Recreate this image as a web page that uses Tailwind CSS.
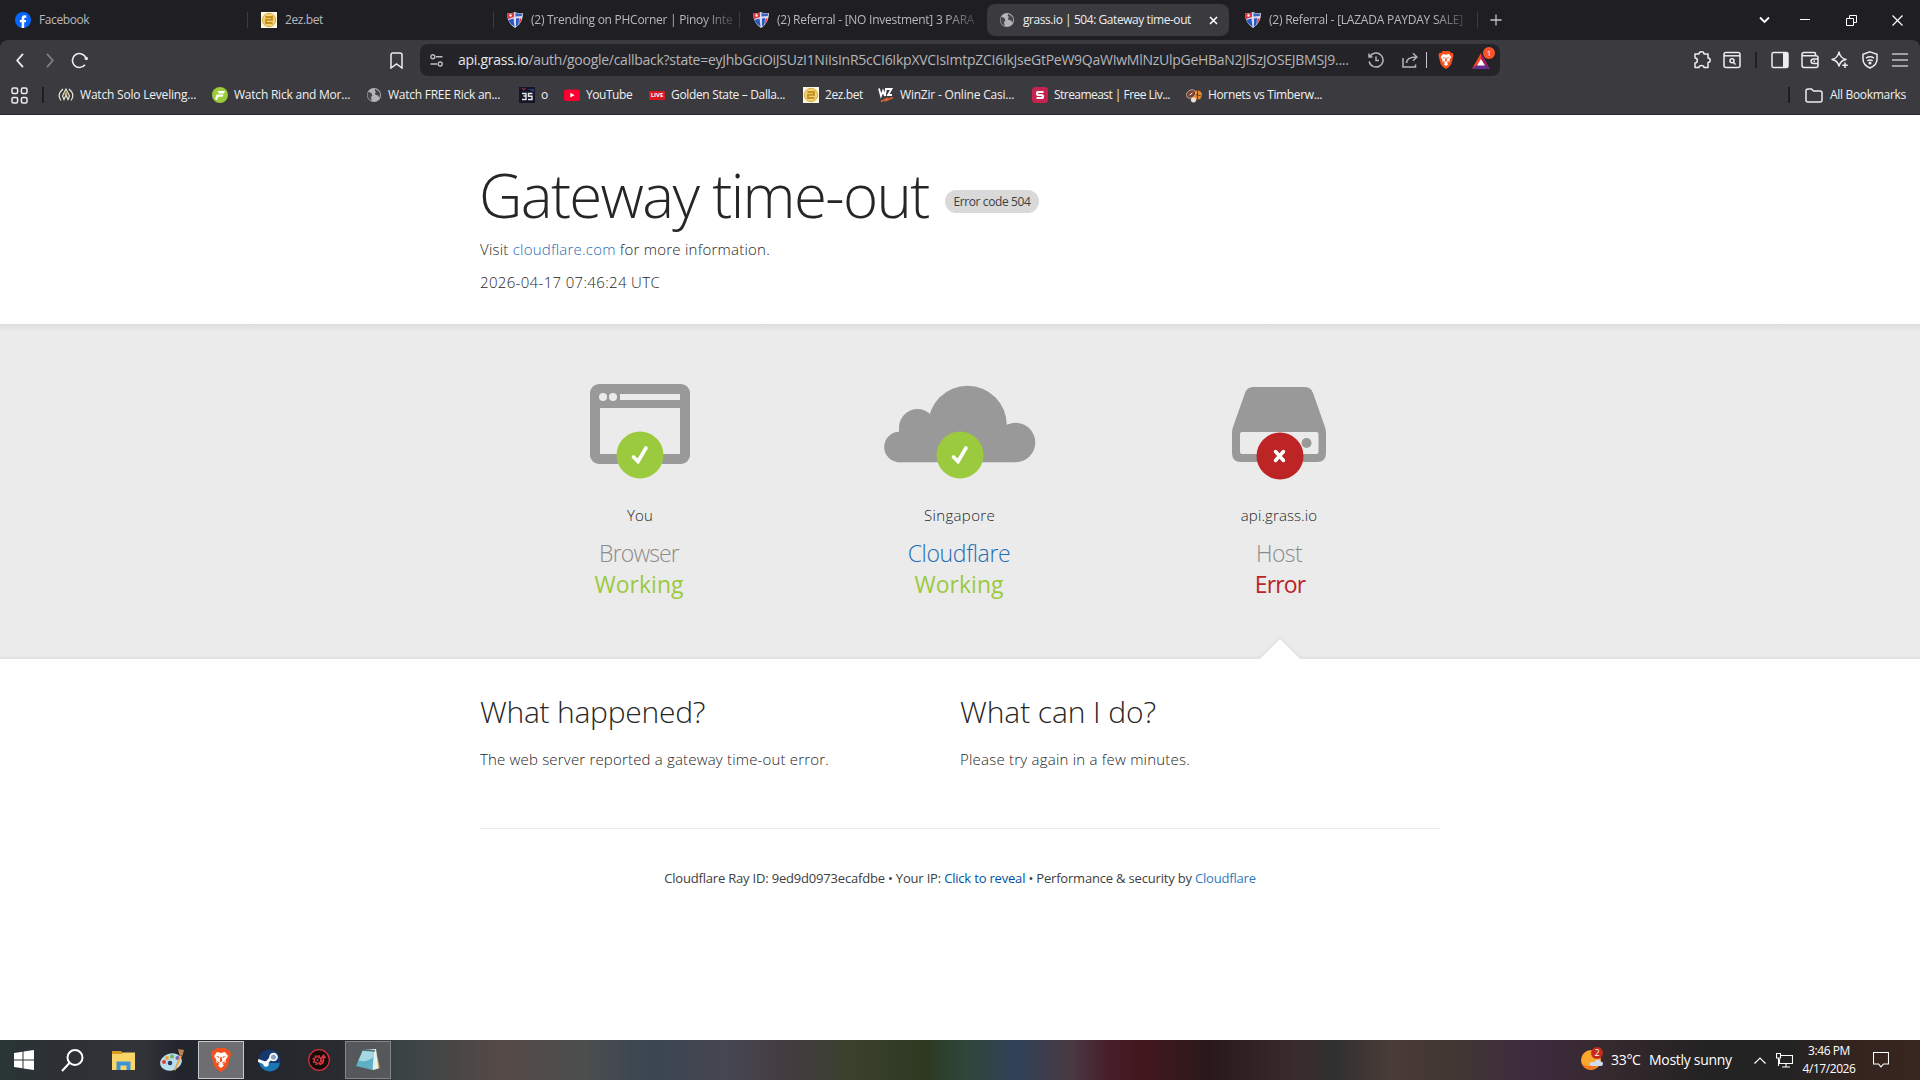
<!DOCTYPE html>
<html lang="en">
<head>
  <meta charset="UTF-8">
  <title>grass.io | 504: Gateway time-out</title>
  <script src="https://cdn.jsdelivr.net/npm/@tailwindcss/browser@4"></script>
</head>
<body class="w-[1920px] h-[1080px] overflow-hidden flex flex-col bg-white font-['Open_Sans','Noto_Sans',sans-serif] text-[#404040]">

  <!-- shared icons -->
  <svg class="hidden">
    <symbol id="ph" viewBox="0 0 16 16">
      <path d="M0 1 Q4 2 8 0 Q12 2 16 1 Q16 11 8 16 Q0 11 0 1Z" fill="#dcdcea"/>
      <path d="M0 1 Q4 2 7 .5 V5 L1 7 Q0 4 0 1Z" fill="#e0303a"/>
      <path d="M8.500 1 Q12 2 15 1.500 L14.800 4 L8.500 4.500Z" fill="#3a62c0"/>
      <path d="M1.300 8 L6.500 6.500 L7.500 14.800 Q3 12 1.300 8Z" fill="#2b55c4"/>
      <path d="M9 6.500 L12 6 L11.500 12 Q10.500 14 9 14.500Z" fill="#2b55c4"/>
      <path d="M12.500 7 L14.500 6 Q14 10 12 12.500Z" fill="#d8303a"/>
      <circle cx="3.500" cy="3.500" r="1.200" fill="#fff"/>
    </symbol>
    <symbol id="globe" viewBox="0 0 16 16">
      <circle cx="8" cy="8" r="7" fill="#b4b4b8"/>
      <path d="M2 5 Q5 5 6 7 Q7 9 5 10 Q5 12 6 14 Q2 12.500 1.500 8.500Z M9 2 Q8 4 10 5 Q8 7 10 8 Q13 8 13 11 Q14.600 9 14 6 Q12.500 3 9 2Z" fill="#45454b"/>
    </symbol>
    <symbol id="coin" viewBox="0 0 16 16">
      <rect width="16" height="16" fill="#fdf8e4"/>
      <circle cx="8" cy="8" r="6.700" fill="#f0d27a" stroke="#d9ac3c"/>
      <path d="M4.500 5 H11 V7.800 H5 V11 H11.500" fill="none" stroke="#c4921f" stroke-width="1.900"/>
    </symbol>
    <symbol id="brave" viewBox="0 0 20 24">
      <path d="M5.500 0 H14.500 L16.500 2.200 L19 2.500 L20 6 L17 17.500 Q15.500 20.500 10 24 Q4.500 20.500 3 17.500 L0 6 L1 2.500 L3.500 2.200Z" fill="#f4511e"/>
      <path d="M6 4 L10 5 L14 4 L17 8 L14.500 12 L15 14 L11.500 16 L13 17.500 L10 20 L7 17.500 L8.500 16 L5 14 L5.500 12 L3 8Z" fill="#fff"/>
      <path d="M5 8 L8.500 8.700 L8 10.300Z M15 8 L11.500 8.700 L12 10.300Z M9.300 9 H10.700 L11.300 13.300 L10 14.300 L8.700 13.300Z M6.500 13 L9 15 L8.300 15.500 L6 14Z M13.500 13 L11 15 L11.700 15.500 L14 14Z" fill="#f4511e"/>
    </symbol>
    <symbol id="check" viewBox="0 0 48 48">
      <circle cx="24" cy="24" r="23.500" fill="#9bca3e"/>
      <path d="M17.500 26 L22 30.500 L30 17" fill="none" stroke="#fff" stroke-width="3.600" stroke-linecap="round"/>
    </symbol>
  </svg>

  <!-- tab strip -->
  <div class="h-10 shrink-0 bg-[#1f1f23] flex items-center text-[12px] leading-4 text-[#b9b9bd] whitespace-nowrap">
    <div class="w-[248px] h-4 flex items-center pl-[15px] gap-2 border-r border-[#3b3b40]">
      <svg class="size-4" viewBox="0 0 16 16"><circle cx="8" cy="8" r="8" fill="#0866ff"/><path d="M6.700 16 V10.300 H4.900 V7.900 H6.700 V6.500 Q6.700 3.300 9.700 3.300 Q10.600 3.300 11.300 3.500 V5.700 H10.200 Q9.200 5.700 9.200 6.800 V7.900 H11.200 L10.800 10.300 H9.200 V16Z" fill="#fff"/></svg>
      <span class="tracking-[-0.4px]">Facebook</span>
    </div>
    <div class="w-[246px] h-4 flex items-center pl-[13px] gap-2 border-r border-[#3b3b40]">
      <svg class="size-4"><use href="#coin"/></svg>
      <span class="tracking-[-0.4px]">2ez.bet</span>
    </div>
    <div class="w-[246px] h-4 flex items-center pl-[13px] gap-2 border-r border-[#3b3b40]">
      <svg class="size-4 shrink-0"><use href="#ph"/></svg>
      <span class="tracking-[-0.26px] mask-[linear-gradient(90deg,#000_85%,#0004)]">(2) Trending on PHCorner | Pinoy Inte</span>
    </div>
    <div class="w-[247px] h-4 flex items-center pl-[13px] gap-2">
      <svg class="size-4 shrink-0"><use href="#ph"/></svg>
      <span class="tracking-[-0.26px] mask-[linear-gradient(90deg,#000_85%,#0004)]">(2) Referral - [NO Investment] 3 PARA</span>
    </div>
    <div class="w-[242px] h-8 flex items-center pl-[12px] pr-[11px] rounded-lg bg-[#3b3b3f] text-[#ededf0]">
      <svg class="size-4 mr-2"><use href="#globe"/></svg>
      <span class="tracking-[-0.44px]">grass.io | 504: Gateway time-out</span>
      <svg class="size-[9px] ml-auto" viewBox="0 0 9 9" stroke="#fff" stroke-width="1.600"><path d="M1 1 L8 8 M8 1 L1 8"/></svg>
    </div>
    <div class="w-[249px] h-4 flex items-center pl-[16px] gap-2 border-r border-[#3b3b40]">
      <svg class="size-4 shrink-0"><use href="#ph"/></svg>
      <span class="tracking-[-0.23px] mask-[linear-gradient(90deg,#000_85%,#0004)]">(2) Referral - [LAZADA PAYDAY SALE]</span>
    </div>
    <svg class="size-3 ml-[12px]" viewBox="0 0 12 12" stroke="#c5c5c9" stroke-width="1.300"><path d="M6 .5 V11.500 M.5 6 H11.500"/></svg>
    <div class="ml-auto flex items-center pr-[17px]">
      <svg class="w-[11px] h-[8px] mr-[30px]" viewBox="0 0 11 8" fill="none" stroke="#fff" stroke-width="1.900"><path d="M1 1.500 L5.500 6 L10 1.500"/></svg>
      <svg class="w-[10px] h-[10px] mr-[36px]" viewBox="0 0 10 10"><path d="M0 4.500 H10" stroke="#fff"/></svg>
      <svg class="size-[11px] mr-[35px]" viewBox="0 0 11 11" fill="none" stroke="#fff"><path d="M.5 3.500 H7.500 V10.500 H.5Z M3.500 3.500 V.5 H10.500 V7.500 H7.500"/></svg>
      <svg class="size-[11px]" viewBox="0 0 11 11" stroke="#fff" stroke-width="1.200"><path d="M.5 .5 L10.500 10.500 M10.500 .5 L.5 10.500"/></svg>
    </div>
  </div>

  <div class="bg-[#1f1f23] shrink-0">
    <div class="h-[75px] rounded-t-lg bg-[#3b3b3f] border-b border-[#2c2c30] text-[#f0f0f2]">
      <!-- address bar -->
      <div class="h-10 flex items-center pl-[16px] pr-[12px]">
        <svg class="w-[8px] h-[15px]" viewBox="0 0 8 15" fill="none" stroke="#ededf0" stroke-width="1.800"><path d="M7 .8 L1.200 7.500 L7 14.200"/></svg>
        <svg class="w-[8px] h-[15px] ml-[22px]" viewBox="0 0 8 15" fill="none" stroke="#7e7e84" stroke-width="1.800"><path d="M1 .8 L6.800 7.500 L1 14.200"/></svg>
        <svg class="w-[18px] h-[17px] ml-[17px]" viewBox="0 0 18 17" fill="none" stroke="#ededf0" stroke-width="1.600"><path d="M14 12.800 A7 7 0 1 1 15 6"/><circle cx="15.300" cy="6.500" r="1.700" fill="#ededf0" stroke="none"/></svg>
        <svg class="w-[13px] h-[17px] ml-[301px]" viewBox="0 0 13 17" fill="none" stroke="#ededf0" stroke-width="1.500"><path d="M1 3 Q1 1 3 1 H10 Q12 1 12 3 V16 L6.500 12 L1 16Z"/></svg>

        <div class="ml-[17px] w-[1080px] h-8 rounded-lg bg-[#242428] flex items-center pl-[10px]">
          <svg class="w-[13px] h-[13px]" viewBox="0 0 13 13" fill="none" stroke="#bdbdc2" stroke-width="1.400"><circle cx="2.800" cy="2.800" r="2"/><path d="M6 2.800 H12.500 M.5 10 H7"/><circle cx="10.200" cy="10" r="2"/></svg>
          <span class="ml-[15px] w-[894px] text-[14px] leading-5 whitespace-nowrap tracking-[-0.27px] text-[#b5b5b9]"><span class="text-[#e6e6e9]">api.grass.io</span>/auth/google/callback?state=eyJhbGciOiJSUzI1NiIsInR5cCI6IkpXVCIsImtpZCI6IkJseGtPeW9QaWIwMlNzUlpGeHBaN2JlSzJOSEJBMSJ9....</span>
          <svg class="w-[16px] h-[16px] ml-[16px]" viewBox="0 0 16 16" fill="none" stroke="#b5b5b9" stroke-width="1.500"><path d="M2 4.500 A7 7 0 1 1 1.200 9.500 M1 1.500 V5 H4.500 M8 4.500 V8.500 H11"/></svg>
          <svg class="w-[16px] h-[16px] ml-[18px]" viewBox="0 0 16 16" fill="none" stroke="#b5b5b9" stroke-width="1.500"><path d="M1 6 V15 H13.500 V12.500 M4.500 11 Q4.500 5 14.500 5 M11 1.200 L15 5 L11 8.800"/></svg>
          <span class="w-px h-4 bg-[#c9c9cd] ml-[8px]"></span>
          <svg class="w-[16px] h-[18px] ml-[11px]"><use href="#brave"/></svg>
          <div class="relative ml-[18px] w-[18px] h-[15px]">
            <svg class="w-[18px] h-[16px]" viewBox="0 0 18 16"><path d="M9 0 L9 9 L0 16Z" fill="#ff4724"/><path d="M9 0 L18 16 L9 9Z" fill="#9e1f63"/><path d="M0 16 H18 L9 9Z" fill="#662d91"/><path d="M9 6 L13 12.500 H5Z" fill="#fff"/></svg>
            <span class="absolute -top-[6px] left-[11px] size-[12px] rounded-full bg-[#fb542b] text-white text-[8px] leading-[12px] text-center">1</span>
          </div>
        </div>

        <div class="ml-auto flex items-center">
          <svg class="size-[18px]" viewBox="0 0 18 18" fill="none" stroke="#ededf0" stroke-width="1.500" stroke-linejoin="round"><path d="M2 3 H6 Q6 .8 8.500 .8 Q11 .8 11 3 H15 V7 Q17.200 7 17.200 9.300 Q17.200 11.500 15 11.500 V16.500 H11 Q11 14.500 8.500 14.500 Q6 14.500 6 16.500 H2 V12 Q4.300 12 4.300 9.500 Q4.300 7 2 7Z"/></svg>
          <svg class="size-[18px] ml-[12px]" viewBox="0 0 18 18" fill="none" stroke="#ededf0" stroke-width="1.500"><rect x="1" y="1.500" width="16" height="15" rx="2"/><path d="M1 4.800 H17"/><circle cx="9" cy="9.800" r="2"/><path d="M10.500 11.500 L12.500 13.500"/></svg>
          <span class="w-[2px] h-4 bg-[#1f1f23] ml-[14px]"></span>
          <svg class="size-[18px] ml-[14px]" viewBox="0 0 18 18"><rect x="1" y="1.500" width="16" height="15" rx="1.500" fill="none" stroke="#ededf0" stroke-width="1.500"/><path d="M12 1.500 H17 V16.500 H12Z" fill="#ededf0"/></svg>
          <svg class="size-[18px] ml-[12px]" viewBox="0 0 18 18" fill="none" stroke="#ededf0" stroke-width="1.500"><path d="M14.500 4.500 V2.500 Q14.500 1.500 13 1.500 H3 Q1 1.500 1 3.300 V14 Q1 16.500 3 16.500 H15 Q17 16.500 17 14.500 V6.500 Q17 4.700 15 4.700 H3 Q1 4.700 1 3.300 M17 8 H12.500 Q10 8 10 10.300 Q10 12.500 12.500 12.500 H17 M12.500 10.300 H14"/></svg>
          <svg class="size-[18px] ml-[12px]" viewBox="0 0 18 18" fill="none" stroke="#ededf0" stroke-width="1.500" stroke-linejoin="round"><path d="M8 1 Q9 7 15 8.500 Q9.500 9.500 8 15 Q6.500 9.500 1 8.500 Q7 7 8 1Z"/><path d="M14 11.500 V17 M11.300 14.200 H16.800"/></svg>
          <svg class="w-[16px] h-[18px] ml-[13px]" viewBox="0 0 16 18" fill="none" stroke="#ededf0" stroke-width="1.500"><path d="M8 .9 L15 3.300 V8 Q15 14 8 17 Q1 14 1 8 V3.300Z"/><path d="M4 7.200 Q8 4.500 12 7.200 M5.300 9.800 Q8 8 10.700 9.800"/><circle cx="8" cy="12" r=".8" fill="#ededf0"/></svg>
          <svg class="w-[16px] h-[14px] ml-[14px]" viewBox="0 0 16 14" stroke="#c4c4c8" stroke-width="1.600"><path d="M0 1 H16 M0 7 H16 M0 13 H16"/></svg>
        </div>
      </div>

      <!-- bookmarks bar -->
      <div class="h-[30px] flex items-center pl-[11px] pr-[14px] text-[12px] leading-4 whitespace-nowrap">
        <svg class="size-[17px]" viewBox="0 0 17 17" fill="none" stroke="#ededf0" stroke-width="1.500"><rect x="1" y="1" width="5.600" height="5.600" rx="1.500"/><rect x="10.400" y="1" width="5.600" height="5.600" rx="1.500"/><rect x="1" y="10.400" width="5.600" height="5.600" rx="1.500"/><rect x="10.400" y="10.400" width="5.600" height="5.600" rx="1.500"/></svg>
        <span class="w-[2px] h-4 bg-[#1f1f23] ml-[14px] mr-[14px]"></span>
        <div class="w-[154px] flex items-center gap-[6px]">
          <svg class="size-4" viewBox="0 0 16 16" fill="none" stroke="#e9e4d2" stroke-width="1.200"><path d="M5 2 Q-1.500 7.500 3 13.500 M11 2 Q17.500 7.500 13 13.500 M8 2 L4.500 9 L6 12.500 L8 8 L10 12.500 L11.500 9Z"/><path d="M8 4 L6.500 8 H9.500Z" fill="#d8b04a" stroke="none"/></svg>
          <span class="tracking-[-0.2px]">Watch Solo Leveling...</span>
        </div>
        <div class="w-[154px] flex items-center gap-[6px]">
          <svg class="size-4" viewBox="0 0 16 16"><circle cx="8" cy="8" r="8" fill="#9ccb3b"/><path d="M5.500 4 H13 L12 6.500 H7 M4.500 7.500 H11.500 L10.500 9.800 H6.500 L5 13 L3 12Z" fill="#fff"/></svg>
          <span class="tracking-[-0.22px]">Watch Rick and Mor...</span>
        </div>
        <div class="w-[153px] flex items-center gap-[6px]">
          <svg class="size-4"><use href="#globe"/></svg>
          <span class="tracking-[-0.25px]">Watch FREE Rick an...</span>
        </div>
        <div class="w-[45px] flex items-center gap-[6px]">
          <svg class="size-4" viewBox="0 0 16 16"><rect width="16" height="16" fill="#14142a"/><path d="M2 1 H7 L5 4Z" fill="#7a2430"/><path d="M9 2 H15 V5Z" fill="#28407c"/><path d="M3 6.500 H7 V9 H4.500 M7 9 V12.500 H3 M13.500 6.500 H9.500 V9.300 H13 V12.500 H9" fill="none" stroke="#e6e6e6" stroke-width="1.400"/></svg>
          <span>o</span>
        </div>
        <div class="w-[85px] flex items-center gap-[6px]">
          <svg class="size-4" viewBox="0 0 16 16"><rect y="2.500" width="16" height="11.500" rx="2.500" fill="#ff0033"/><path d="M6.300 5.800 L10.500 8.200 L6.300 10.600Z" fill="#fff"/></svg>
          <span class="tracking-[-0.45px]">YouTube</span>
        </div>
        <div class="w-[154px] flex items-center gap-[6px]">
          <span class="w-4 h-[9px] bg-[#d81920] rounded-[1px] text-white text-[6px] leading-[9px] font-bold text-center">LIVE</span>
          <span class="tracking-[-0.34px]">Golden State – Dalla...</span>
        </div>
        <div class="w-[75px] flex items-center gap-[6px]">
          <svg class="size-4"><use href="#coin"/></svg>
          <span class="tracking-[-0.4px]">2ez.bet</span>
        </div>
        <div class="w-[154px] flex items-center gap-[6px]">
          <svg class="size-4" viewBox="0 0 16 16" fill="none"><path d="M1 1.500 L3 9 L5 4 L7 9 L8 1 M8.500 2 H13.500 L10 8 H14" stroke="#fff" stroke-width="1.800"/><path d="M3 14.500 L9 11.500 L8 13.500 L15 10.500" stroke="#e8642c" stroke-width="1.400"/></svg>
          <span class="tracking-[-0.2px]">WinZir - Online Casi...</span>
        </div>
        <div class="w-[154px] flex items-center gap-[6px]">
          <svg class="size-4" viewBox="0 0 16 16"><rect width="16" height="16" rx="3.500" fill="#c8234d"/><path d="M11.500 5 H6 Q5 5 5 6.200 Q5 8 6.500 8 H9.500 Q11 8 11 9.500 Q11 11 9.500 11 H4.500" fill="none" stroke="#fff" stroke-width="2.200"/></svg>
          <span class="tracking-[-0.54px]">Streameast | Free Liv...</span>
        </div>
        <div class="flex items-center gap-[6px]">
          <svg class="size-4" viewBox="0 0 16 16"><circle cx="11.500" cy="8" r="4.500" fill="#e58a2c"/><path d="M7.500 7 L15.500 9 M11.500 3.500 V12.500" stroke="#5a3212" stroke-width=".8"/><ellipse cx="5" cy="7" rx="5" ry="3.800" transform="rotate(-35 5 7)" fill="#7a4030" stroke="#e9d8cc" stroke-width=".6"/><path d="M3.500 8 L6.500 6" stroke="#fff"/><circle cx="7.500" cy="12.800" r="2.600" fill="#e9e2d8"/></svg>
          <span class="tracking-[-0.35px]">Hornets vs Timberw...</span>
        </div>
        <div class="ml-auto flex items-center">
          <span class="w-[2px] h-4 bg-[#1f1f23] mr-[15px]"></span>
          <svg class="w-[18px] h-[15px] mr-[7px]" viewBox="0 0 18 15" fill="none" stroke="#ededf0" stroke-width="1.500"><path d="M1 3 Q1 1 3 1 H6.500 L8.500 3 H15 Q17 3 17 5 V12 Q17 14 15 14 H3 Q1 14 1 12Z"/></svg>
          <span class="tracking-[-0.3px]">All Bookmarks</span>
        </div>
      </div>
    </div>
  </div>

  <!-- page -->
  <main class="flex-1 font-light text-[15px] leading-6 text-[#262626]">
    <header class="w-[960px] h-[209px] mx-auto pt-[50px]">
      <div class="flex items-start">
        <h1 class="text-[60px] leading-[60px] tracking-[-1.65px] whitespace-nowrap w-[466px] -ml-px">Gateway time-out</h1>
        <span class="mt-[25px] h-[23px] w-[94px] rounded-full bg-[#d9d9d9] text-[12px] leading-[23px] font-normal tracking-[-0.38px] text-center text-[#404040]">Error code 504</span>
      </div>
      <p class="mt-[12px] tracking-[0.23px]">Visit <a class="text-[#1f6cb2]">cloudflare.com</a> for more information.</p>
      <p class="mt-[9px] tracking-[0.33px]">2026-04-17 07:46:24 UTC</p>
    </header>

    <section class="relative h-[335px] bg-[linear-gradient(180deg,#dedede_0px,#ebebeb_8px,#ebebeb_331px,#dfdfdf_335px)]">
      <div class="w-[960px] mx-auto grid grid-cols-3 text-center pt-[60px]">
        <div>
          <div class="relative h-[119px]">
            <svg class="w-[100px] h-[80px] mx-auto" viewBox="0 0 100 80">
              <rect width="100" height="80" rx="9" fill="#999"/>
              <circle cx="13" cy="13" r="4" fill="#ebebeb"/><circle cx="23" cy="13" r="4" fill="#ebebeb"/>
              <path d="M30 10 H90 V16 H30Z M10 24 H90 V70 H10Z" fill="#ebebeb"/>
            </svg>
            <svg class="absolute left-[136px] top-[47px] size-12"><use href="#check"/></svg>
          </div>
          <p class="tracking-[0.2px]">You</p>
          <h3 class="mt-[11px] -ml-[2px] text-[23px] leading-[31px] tracking-[-0.85px] text-[#8c8c8c]">Browser</h3>
          <p class="-ml-[2px] text-[23px] leading-[31px] font-normal text-[#9bca3e]">Working</p>
        </div>
        <div>
          <div class="relative h-[119px]">
            <svg class="w-[152px] h-[80px] mx-auto" viewBox="0 0 152 80">
              <g fill="#999"><circle cx="15.500" cy="63" r="15.300"/><circle cx="33.500" cy="43.500" r="18.500"/><circle cx="83.500" cy="41" r="39.300"/><circle cx="131.500" cy="58.500" r="19.800"/><path d="M15 45 H131 V78.300 H15Z"/></g>
            </svg>
            <svg class="absolute left-[136px] top-[47px] size-12"><use href="#check"/></svg>
          </div>
          <p class="-ml-px tracking-[0.35px]">Singapore</p>
          <h3 class="mt-[11px] -ml-[2px] text-[23px] leading-[31px] tracking-[-0.35px] text-[#1f6cb2]">Cloudflare</h3>
          <p class="-ml-[2px] text-[23px] leading-[31px] font-normal text-[#9bca3e]">Working</p>
        </div>
        <div>
          <div class="relative h-[119px]">
            <svg class="w-[94px] h-[80px] ml-[112px]" viewBox="0 0 94 80">
              <path d="M21 3 H73 Q79 3 81 9 L93 43 Q94 46 94 49 V69 Q94 78 85 78 H9 Q0 78 0 69 V49 Q0 46 1 43 L13 9 Q15 3 21 3Z" fill="#999"/>
              <rect x="8" y="48" width="78.500" height="22" rx="2" fill="#ebebeb"/>
              <circle cx="74.500" cy="59" r="5" fill="#999"/>
            </svg>
            <svg class="absolute left-[136px] top-[48px] size-12" viewBox="0 0 48 48"><circle cx="24" cy="24" r="23.500" fill="#bd2426"/><path d="M19.500 19.500 L27.500 28.500 M27.500 19.500 L19.500 28.500" stroke="#fff" stroke-width="3.500" stroke-linecap="round"/></svg>
          </div>
          <p class="-ml-[2px] tracking-[0.1px]">api.grass.io</p>
          <h3 class="mt-[11px] -ml-[2px] text-[23px] leading-[31px] tracking-[-0.6px] text-[#8c8c8c]">Host</h3>
          <p class="text-[23px] leading-[31px] font-normal tracking-[-0.9px] text-[#bd2426]">Error</p>
        </div>
      </div>
      <!-- pointer under the failing hop -->
      <svg class="absolute left-[1256px] bottom-0 w-[48px] h-[24px]" viewBox="0 0 48 24"><path d="M3 24 L24 3 L45 24" fill="none" stroke="#e2e2e2" stroke-width="2"/><path d="M4 24 L24 4 L44 24Z" fill="#fff"/></svg>
    </section>

    <section class="w-[960px] mx-auto">
      <div class="h-[170px] grid grid-cols-2 content-start pt-[33px] border-b border-[#ebebeb]">
        <div>
          <h2 class="text-[30px] leading-10 tracking-[-0.25px]">What happened?</h2>
          <p class="mt-[15px] tracking-[0.18px]">The web server reported a gateway time-out error.</p>
        </div>
        <div>
          <h2 class="text-[30px] leading-10 tracking-[-0.08px]">What can I do?</h2>
          <p class="mt-[15px] tracking-[0.22px]">Please try again in a few minutes.</p>
        </div>
      </div>
      <p class="mt-[39px] text-center text-[13px] leading-5 font-normal tracking-[-0.19px] text-[#404040]">Cloudflare Ray ID: 9ed9d0973ecafdbe • Your IP: <a class="text-[#0051a3]">Click to reveal</a> • Performance &amp; security by <a class="text-[#2f7bbf]">Cloudflare</a></p>
    </section>
  </main>

  <!-- taskbar -->
  <footer class="h-10 shrink-0 flex items-center text-white bg-[linear-gradient(90deg,#2a3635_0px,#2c2f34_60px,#33343a_140px,#23252c_180px,#24262d_250px,#2a2b30_340px,#3a4445_400px,#444645_440px,#564a48_505px,#4d4e4e_580px,#3a4652_650px,#464651_730px,#433c40_790px,#3a412c_850px,#2e3922_925px,#2f4639_965px,#2f4358_1015px,#4a3a44_1070px,#47202a_1105px,#45181f_1135px,#29191a_1210px,#3a2b2d_1300px,#303030_1335px,#4a3c37_1390px,#413633_1460px,#3e2a3f_1535px,#35292d_1610px,#242324_1700px,#232323_1790px,#34241f_1850px,#38261f_1920px)]">
    <svg class="size-5 ml-[14px]" viewBox="0 0 20 20" fill="#fff"><path d="M0 3 L8.500 1.700 V9.500 H0Z M9.500 1.500 L20 0 V9.500 H9.500Z M0 10.500 H8.500 V18.300 L0 17Z M9.500 10.500 H20 V20 L9.500 18.500Z"/></svg>
    <svg class="size-[23px] ml-[27px]" viewBox="0 0 23 23" fill="none" stroke="#fff" stroke-width="2"><circle cx="14" cy="8.500" r="7.500"/><path d="M8.700 13.800 L1 22"/></svg>
    <svg class="w-[23px] h-[19px] ml-[28px]" viewBox="0 0 23 19"><path d="M0 0 H9 L11 2 V6 H0Z" fill="#d99a22"/><path d="M0 3 H9.500 L11 1.500 H23 V19 H0Z" fill="#f9d466"/><path d="M4.500 19 V10.500 H18.500 V19 H14.500 V14.500 H8.500 V19Z" fill="#3d93d6"/></svg>
    <svg class="w-[25px] h-[24px] ml-[25px]" viewBox="0 0 25 24">
      <ellipse cx="11" cy="14" rx="11" ry="8.500" transform="rotate(-15 11 14)" fill="#b9dcee"/><circle cx="4" cy="14" r="2" fill="#d9423c"/><circle cx="7" cy="10" r="2" fill="#e9a73a"/><circle cx="12" cy="8.500" r="2" fill="#72b64a"/><circle cx="10" cy="15" r="2.300" fill="#2c3f63"/><circle cx="17.500" cy="10" r="2" fill="#7a5cc0"/>
      <path d="M14 22 L20 7 L22 8 L15.500 22.500Z" fill="#e7a844"/><path d="M18 1 L24 2 L22.500 7.500 L19.500 7Z" fill="#c08350"/>
    </svg>
    <div class="w-[46px] h-[38px] ml-[13px] flex items-center justify-center bg-[#6d6d72] border border-[#c9c9cb]"><svg class="w-[20px] h-[24px]"><use href="#brave"/></svg></div>
    <svg class="size-[23px] ml-[14px]" viewBox="0 0 23 23"><circle cx="11.500" cy="11.500" r="11" fill="#15386f"/><path d="M1 14 Q4 22 12 22.500 Q20 22 22 14Z" fill="#1b78b4"/><path d="M0 11.500 L8 14.500 L13 9" fill="none" stroke="#fff" stroke-width="3"/><circle cx="8" cy="15" r="2.700" fill="#fff"/><circle cx="15.500" cy="8" r="4.300" fill="#fff"/><circle cx="15.500" cy="8" r="2.600" fill="#8aa3c4"/></svg>
    <svg class="size-[22px] ml-[27px]" viewBox="0 0 22 22" fill="none"><circle cx="11" cy="11" r="10.300" fill="#150c0e" stroke="#d32f35" stroke-width="1.200"/><circle cx="9.500" cy="11" r="4.300" stroke="#d9363b" stroke-width="1.600" stroke-dasharray="1.900 1.480"/><circle cx="9.500" cy="11" r="3.200" stroke="#d9363b" stroke-width="1.200"/><circle cx="9.500" cy="11" r="1" fill="#d9363b"/><path d="M12 15.500 Q16 14 15.500 8.500" stroke="#d9363b" stroke-width="1.700"/><path d="M12.500 9 L15.500 5 L18.500 9Z" fill="#d9363b"/></svg>
    <div class="w-[46px] h-[38px] ml-[15px] flex items-center justify-center bg-[#55585a] border border-[#838587]">
      <svg class="w-[24px] h-[22px]" viewBox="0 0 24 22"><path d="M20 1 L24 19 L16 21Z" fill="#b59a5c"/><path d="M7 1 L20 0 L22.500 19.500 L17 21Z" fill="#e6eef0"/><path d="M7 1 L18 2 L16.500 21 L0 17Z" fill="#5fb0c4"/><path d="M7 1 L18 2 L17.500 8 Q10 14 2.500 11.500Z" fill="#a5d8e2"/><path d="M7 1 L19 2" stroke="#4b6a72" stroke-width="1.500"/></svg>
    </div>

    <div class="ml-auto flex items-center">
      <div class="relative w-[22px] h-[22px]">
        <svg class="size-[22px]" viewBox="0 0 22 22"><circle cx="10" cy="11" r="10" fill="#f9a82b"/><path d="M1 15 Q10 20 16 12 Q18 17 14 20 Q5 23 1 15Z" fill="#f47b20"/><path d="M11 17 H20 Q22 17 22 14.800 Q22 12.500 19.500 12.500 Q18.500 10 16 10.500 Q14 11 13.500 13 H11 Q8.500 13 8.500 15 Q8.500 17 11 17Z" fill="#cfdcf3"/></svg>
        <span class="absolute -top-[2px] left-[10px] size-[12px] rounded-full bg-[#c42b1c] text-[9px] leading-[12px] text-center">2</span>
      </div>
      <span class="ml-[8px] w-[38px] text-[14px] leading-5 tracking-[-0.3px]">33°C</span>
      <span class="w-[94px] text-[14px] leading-5 tracking-[-0.3px] whitespace-nowrap">Mostly sunny</span>
      <svg class="w-[12px] h-[7px] ml-[11px]" viewBox="0 0 12 7" fill="none" stroke="#fff" stroke-width="1.200"><path d="M.5 6.500 L6 1 L11.500 6.500"/></svg>
      <svg class="w-[17px] h-[15px] ml-[10px]" viewBox="0 0 17 15" fill="none" stroke="#fff" stroke-width="1.100"><path d="M5 2.500 H16.500 V10.500 H3.500 V6 M10 10.500 V14 M6 14 H14 M.5 .5 H4.500 V5 H.5Z M2.500 5 V13"/></svg>
      <div class="w-[56px] ml-[8px] text-[12px] leading-[18px] tracking-[-0.43px] text-center whitespace-nowrap"><p>3:46 PM</p><p>4/17/2026</p></div>
      <svg class="w-[16px] h-[16px] ml-[16px] mr-[31px]" viewBox="0 0 16 16" fill="none" stroke="#fff" stroke-width="1.100"><path d="M.5 .5 H15.500 V12 H10.500 L8 14.800 L5.500 12 H.5Z"/></svg>
    </div>
  </footer>
</body>
</html>
